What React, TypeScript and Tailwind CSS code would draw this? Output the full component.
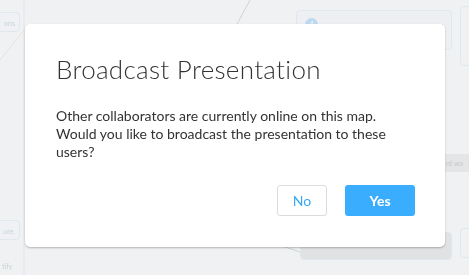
const App = () => {
  return (
    <div className="relative w-[469px] h-[275px] overflow-hidden bg-[#f0f1f2] font-['Lato',sans-serif]">
      {/* faded mind map behind the overlay */}
      <div className="absolute inset-0 opacity-40">
        <div className="absolute left-[-10px] top-[12px] w-[30px] h-[20px] rounded border border-[#c9daea] bg-[#eef3f8] text-[7px] text-[#8aa] leading-[20px] text-right pr-1">ons</div>
        <div className="absolute left-[-10px] top-[220px] w-[30px] h-[20px] rounded border border-[#c9daea] bg-[#eef3f8] text-[7px] text-[#8aa] leading-[20px] text-right pr-1">ure.</div>
        <div className="absolute left-[2px] top-[262px] text-[7px] leading-[9px] text-[#8aa]">tify</div>
        <div className="absolute left-[296px] top-[10px] w-[156px] h-[40px] rounded border border-[#c9daea] bg-[#e9eef3]">
          <div className="absolute left-[8px] top-[7px] w-[13px] h-[13px] rounded-full bg-[#6fb6ea] text-white text-[8px] leading-[13px] text-center">4</div>
          <div className="absolute left-[16px] top-[13px] w-[130px] h-[25px] bg-[#c9ccd0]"></div>
        </div>
        <div className="absolute left-[300px] top-[232px] w-[152px] h-[28px] rounded border border-[#c9daea] bg-[#c9ccd0]"></div>
        <div className="absolute left-[444px] top-[154px] w-[25px] h-[18px] bg-[#d2d4d6] text-[7px] text-[#888] leading-[18px] pl-[2px]">nt wa</div>
        <div className="absolute left-[460px] top-[6px] w-[20px] h-[60px] rounded border border-[#c9daea]"></div>
        <div className="absolute left-[460px] top-[228px] w-[20px] h-[30px] rounded border border-[#c9daea]"></div>
        <svg className="absolute inset-0" width="469" height="275">
          <path d="M250 0 L236 26" stroke="#9aa" strokeWidth="1" fill="none" />
          <path d="M24 0 L24 275" stroke="#c9daea" strokeWidth="1" fill="none" />
          <path d="M0 60 L24 30" stroke="#dcb" strokeWidth="1" fill="none" />
          <path d="M282 246 L300 252" stroke="#9aa" strokeWidth="1" fill="none" />
        </svg>
      </div>

      <div className="relative flex pl-[25px] pt-[24px]">
        <div className="w-[420px] h-[223px] rounded-[5px] bg-white shadow-[0_1px_2px_rgba(0,0,0,0.25)] pl-[31px] pr-[28px] pt-[28px] flex flex-col">
          <h1 className="text-[26px] font-light text-[#333] leading-[34px] tracking-[0.3px]">Broadcast Presentation</h1>
          <p className="mt-[21px] text-[14px] leading-[18px] text-[#333]">
            Other collaborators are currently online on this map.<br />
            Would you like to broadcast the presentation to these<br />
            users?
          </p>
          <div className="mt-[24px] flex justify-end gap-[18px] pr-[2px]">
            <button className="w-[50px] h-[31px] rounded-[3px] border border-[#dcdcdc] bg-white text-[14px] text-[#3aa8f5]">No</button>
            <button className="w-[70px] h-[31px] rounded-[3px] bg-[#3badff] text-[14px] font-bold text-white">Yes</button>
          </div>
        </div>
      </div>
    </div>
  );
};

export default App;
